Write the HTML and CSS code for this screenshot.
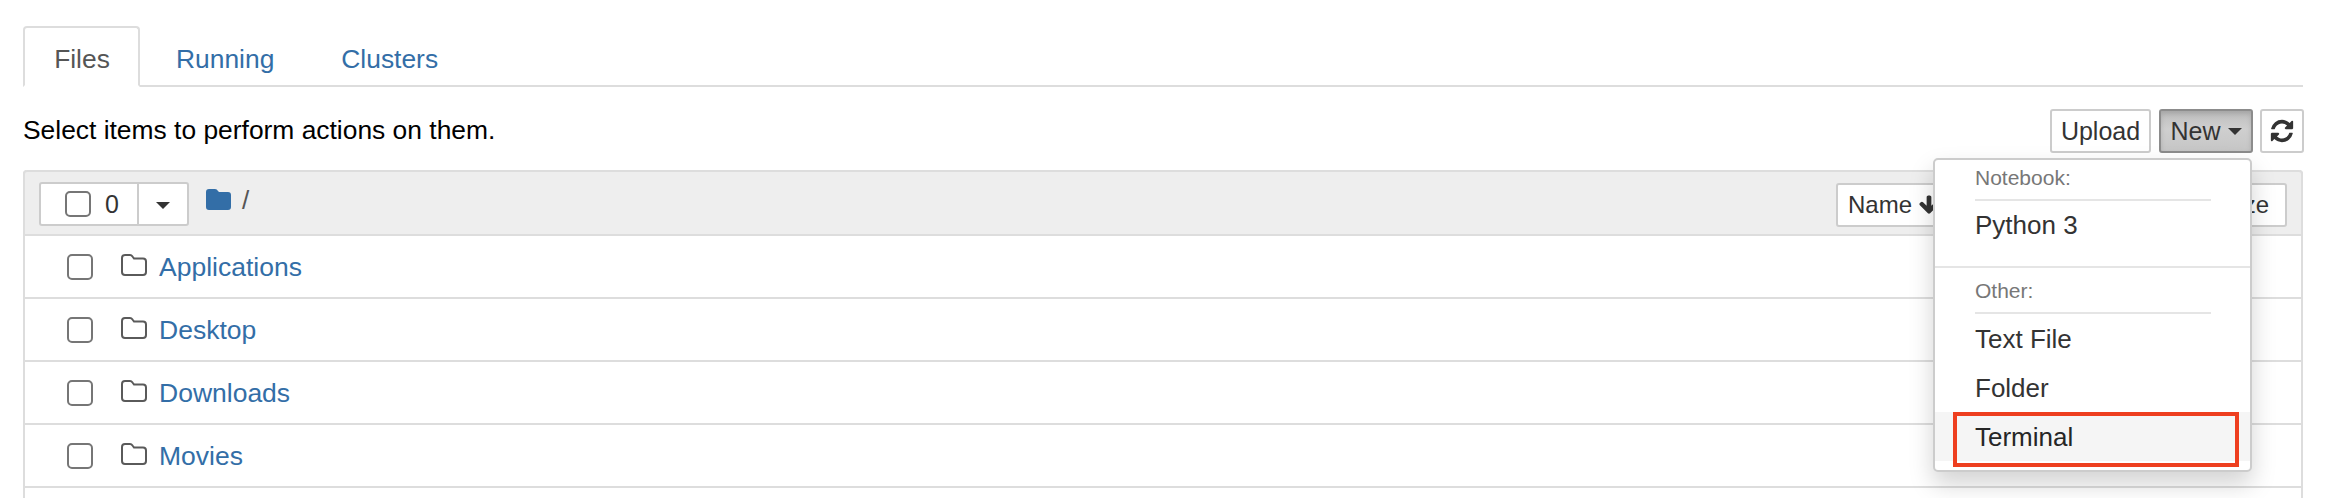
FILE: index.html
```html
<!DOCTYPE html>
<html lang="en">
<head>
<meta charset="utf-8">
<title>Home</title>
<link rel="stylesheet" href="styles.css">
</head>
<body>
<div class="page">
  <ul class="tabs">
    <li class="tab active">Files</li>
    <li class="tab">Running</li>
    <li class="tab">Clusters</li>
  </ul>
  <div class="actions">
    <span class="hint">Select items to perform actions on them.</span>
    <div class="action-buttons">
      <button class="btn btn-upload">Upload</button>
      <button class="btn btn-new">New <i class="caret"></i></button>
      <button class="btn btn-refresh"><svg class="refresh-icon" viewBox="0 0 1792 1792"><path d="M1639 1056q0 5-1 7-64 268-268 434.500t-478 166.500q-146 0-282.500-55t-243.500-157l-129 129q-19 19-45 19t-45-19-19-45v-448q0-26 19-45t45-19h448q26 0 45 19t19 45-19 45l-137 137q71 66 161 102t187 36q134 0 250-65t186-179q11-17 53-117 8-23 30-23h192q13 0 22.500 9.500t9.500 22.500zm25-800v448q0 26-19 45t-45 19h-448q-26 0-45-19t-19-45 19-45l138-138q-148-137-349-137-134 0-250 65t-186 179q-11 17-53 117-8 23-30 23h-199q-13 0-22.500-9.500t-9.500-22.500v-7q65-268 270-434.500t480-166.500q146 0 284 55.500t245 156.500l130-129q19-19 45-19t45 19 19 45z"/></svg></button>
    </div>
  </div>
  <div class="panel">
    <div class="panel-head">
      <div class="select-group">
        <div class="select-count"><input class="check" type="checkbox"><span>0</span></div>
        <div class="select-toggle"><i class="caret"></i></div>
      </div>
      <svg class="crumb-folder" viewBox="0 0 25 21"><path d="M3 0h6q2 0 3 2l1 1h9q3 0 3 3v12q0 3-3 3H3q-3 0-3-3V3q0-3 3-3z"/></svg>
      <span class="crumb">/</span>
      <div class="sort-group">
        <button class="sort sort-name">Name <svg class="arrow-icon" viewBox="0 0 1792 1792"><path d="M1675 832q0 53-37 90l-651 652q-39 37-91 37-53 0-90-37l-651-652q-38-36-38-90 0-53 38-91l74-75q39-37 91-37 53 0 90 37l294 294v-704q0-52 38-90t90-38h128q52 0 90 38t38 90v704l294-294q37-37 90-37 52 0 91 37l75 75q37 39 37 91z"/></svg></button>
        <button class="sort sort-modified"></button>
        <button class="sort sort-size">File size</button>
      </div>
    </div>
    <div class="row">
      <input class="check" type="checkbox">
      <svg class="row-folder" viewBox="0 0 26 22"><path d="M4 1h5q1.500 0 2.500 1.500L13 4.500h9q3 0 3 3V18q0 3-3 3H4q-3 0-3-3V4q0-3 3-3z"/></svg>
      <a class="link">Applications</a>
    </div>
    <div class="row">
      <input class="check" type="checkbox">
      <svg class="row-folder" viewBox="0 0 26 22"><path d="M4 1h5q1.500 0 2.500 1.500L13 4.500h9q3 0 3 3V18q0 3-3 3H4q-3 0-3-3V4q0-3 3-3z"/></svg>
      <a class="link">Desktop</a>
    </div>
    <div class="row">
      <input class="check" type="checkbox">
      <svg class="row-folder" viewBox="0 0 26 22"><path d="M4 1h5q1.500 0 2.500 1.500L13 4.500h9q3 0 3 3V18q0 3-3 3H4q-3 0-3-3V4q0-3 3-3z"/></svg>
      <a class="link">Downloads</a>
    </div>
    <div class="row">
      <input class="check" type="checkbox">
      <svg class="row-folder" viewBox="0 0 26 22"><path d="M4 1h5q1.500 0 2.500 1.500L13 4.500h9q3 0 3 3V18q0 3-3 3H4q-3 0-3-3V4q0-3 3-3z"/></svg>
      <a class="link">Movies</a>
    </div>
    <div class="row row-last"></div>
  </div>
  <div class="menu">
    <div class="menu-head">Notebook:</div>
    <div class="menu-item item-python">Python 3</div>
    <div class="menu-divider"></div>
    <div class="menu-head head-other">Other:</div>
    <div class="menu-item">Text File</div>
    <div class="menu-item">Folder</div>
    <div class="menu-item item-hover">Terminal</div>
    <div class="annotation"></div>
  </div>
</div>
</body>
</html>
```
FILE: styles.css
```css
* { box-sizing: border-box; }
html, body { margin: 0; height: 100%; overflow: hidden; background: #fff; }
body { font-family: "Liberation Sans", Arial, sans-serif; font-size: 26.4px; color: #000; }
.page { position: relative; height: 498px; overflow: hidden; padding: 26px 23px 0 23px; }

.tabs { display: flex; list-style: none; margin: 0; padding: 0; height: 61px; border-bottom: 2px solid #ddd; }
.tab { height: 61px; padding: 16px 30px 0; border: 2px solid transparent; color: #336ea7; line-height: 30px; }
.tab:nth-child(2) { margin-right: 3px; }
.tab.active { width: 117px; padding: 16px 0 0 1px; margin-right: 4px; text-align: center; color: #555; background: #fff; border-color: #ddd; border-bottom-color: #fff; border-radius: 4px 4px 0 0; }

.actions { display: flex; justify-content: space-between; align-items: center; height: 44px; margin-top: 22px; margin-right: -1px; }
.hint { position: relative; top: -1px; }
.action-buttons { display: flex; gap: 7px; }
.btn { height: 44px; padding: 0; font: inherit; font-size: 25px; color: #333; background: #fff; border: 2px solid #ccc; border-radius: 3px; display: flex; align-items: center; justify-content: center; gap: 7px; }
.btn-upload { width: 101px; margin-right: 1px; }
.btn-new { width: 94px; background: linear-gradient(#bdbdbd, #cfcfcf 45%, #c6c6c6); border-color: #8c8c8c; box-shadow: inset 0 3px 5px rgba(0,0,0,.125); }
.btn-refresh { width: 44px; }
.refresh-icon { width: 26px; height: 26px; fill: #333; }
.caret { display: inline-block; width: 0; height: 0; border-top: 7px solid #333; border-left: 7.5px solid transparent; border-right: 7.5px solid transparent; }

.panel { margin-top: 17px; border-left: 2px solid #ddd; border-right: 2px solid #ddd; border-radius: 4px 4px 0 0; }
.panel-head { display: flex; align-items: flex-start; height: 66px; padding: 10px 14px 0; margin: 0 -2px; background: #eee; border: 2px solid #ddd; border-radius: 4px 4px 0 0; }
.select-group { display: flex; height: 44px; width: 150px; background: #fff; border: 2px solid #ccc; border-radius: 3px; }
.select-count { width: 98px; display: flex; align-items: center; padding-left: 24px; gap: 14px; border-right: 2px solid #ccc; font-size: 25px; color: #333; }
.select-toggle { flex: 1; display: flex; align-items: center; justify-content: center; padding-top: 2px; }
.crumb-folder { width: 25px; height: 21px; margin: 7px 0 0 17px; fill: #336ea7; }
.crumb { margin: 3px 0 0 11px; color: #555; line-height: 30px; font-size: 26px; }
.sort-group { display: flex; margin-left: auto; margin-top: 1px; }
.sort { height: 44px; padding: 0 10px; font: inherit; font-size: 24px; color: #333; background: #fff; border: 2px solid #ccc; margin-left: -2px; border-radius: 3px; display: flex; align-items: center; gap: 6px; white-space: nowrap; }
.sort-name { width: 150px; margin-left: 0; }
.sort-modified { width: 178px; }
.sort-size { width: 127px; justify-content: flex-end; padding-right: 16px; }
.arrow-icon { width: 22px; height: 22px; fill: #333; }

.check { appearance: none; -webkit-appearance: none; flex: none; width: 26px; height: 26px; margin: 0; background: #fff; border: 2px solid #767676; border-radius: 5px; }
.row { display: flex; align-items: center; height: 63px; padding-left: 42px; border-bottom: 2px solid #ddd; }
.row-last { height: 10px; border-bottom: 0; }
.row-folder { width: 26px; height: 22px; margin: -3px 0 0 28px; fill: #fff; stroke: #5a5a5a; stroke-width: 2; }
.link { margin-left: 12px; padding-top: 1px; color: #336ea7; font-size: 26.5px; }

.menu { position: absolute; left: 1933px; top: 158px; width: 319px; height: 314px; background: #fff; border: 2px solid #ccc; border-radius: 5px; box-shadow: 0 12px 24px rgba(0,0,0,.175); }
.menu-head { height: 41px; margin: 0 39px 0 40px; line-height: 36px; font-size: 21px; color: #777; border-bottom: 2px solid #e5e5e5; }
.head-other { height: 46px; line-height: 46px; }
.menu-item { height: 49px; padding-left: 40px; line-height: 51px; font-size: 26px; color: #333; }
.item-python { height: 65px; line-height: 48px; }
.menu-divider { height: 2px; background: #e5e5e5; }
.item-hover { background: #f5f5f5; color: #262626; }
.annotation { position: absolute; left: 18px; top: 252px; width: 286px; height: 55px; border: 4px solid #ee3f1f; }
```
